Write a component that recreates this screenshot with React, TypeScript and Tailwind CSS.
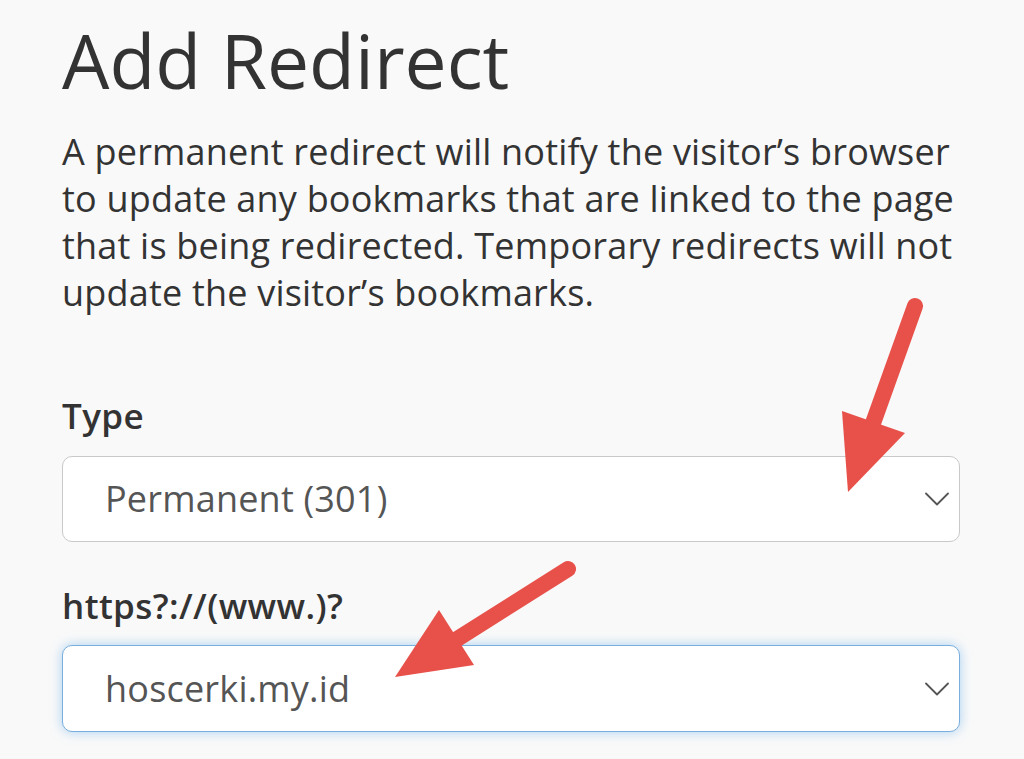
import React from 'react';

function Chevron() {
    return (
        <svg width="24" height="14" viewBox="0 0 24 14" fill="none" className="shrink-0">
            <path d="M1 1.5L12 12.5L23 1.5" stroke="#555" strokeWidth="1.8" strokeLinecap="round" strokeLinejoin="round" />
        </svg>
    );
}

function SelectBox({ value, focused }: { value: string; focused?: boolean }) {
    return (
        <div
            className={
                focused
                    ? 'flex h-[87px] w-[898px] items-center justify-between rounded-[10px] border border-[#7aaedc] bg-white pl-[42px] pr-[10px] shadow-[0_0_12px_rgba(102,175,233,0.55)]'
                    : 'flex h-[86px] w-[898px] items-center justify-between rounded-[10px] border border-[#c9c9c9] bg-white pl-[42px] pr-[10px]'
            }
        >
            <span className="text-[36px] leading-[44px] tracking-[0.2px] text-[#555]">{value}</span>
            <Chevron />
        </div>
    );
}

export default function App() {
    return (
        <main
            className="relative h-[759px] w-[1024px] overflow-hidden bg-[#f9f9f9] pl-[62px] text-[#333]"
            style={{ fontFamily: '"Open Sans", "Noto Sans", sans-serif' }}
        >
            <h1 className="pt-[13px] text-[75px] font-normal leading-[94px]">Add Redirect</h1>

            <p className="mt-[21px] w-[900px] text-[36px] leading-[47px] tracking-[0.2px]">
                A permanent redirect will notify the visitor’s browser to update any bookmarks that are linked to the page
                that is being redirected. Temporary redirects will not update the visitor’s bookmarks.
            </p>

            <label className="mt-[80px] block text-[35px] font-semibold leading-[40px] tracking-[0.4px]">Type</label>
            <div className="mt-[20px]">
                <SelectBox value="Permanent (301)" />
            </div>

            <label className="mt-[44px] block text-[35px] font-semibold leading-[40px] tracking-[0.4px]">https?://(www.)?</label>
            <div className="mt-[19px]">
                <SelectBox value="hoscerki.my.id" focused />
            </div>

            {/* annotation arrows drawn over the screenshot */}
            <svg className="pointer-events-none absolute inset-0" width="1024" height="759" viewBox="0 0 1024 759">
                <line x1="915" y1="306" x2="872" y2="426" stroke="#e8504a" strokeWidth="16" strokeLinecap="round" />
                <polygon points="842,411 905,433 848,492" fill="#e8504a" />
                <line x1="568" y1="569" x2="454" y2="641" stroke="#e8504a" strokeWidth="16" strokeLinecap="round" />
                <polygon points="439,610 474,665 395,677" fill="#e8504a" />
            </svg>
        </main>
    );
}
